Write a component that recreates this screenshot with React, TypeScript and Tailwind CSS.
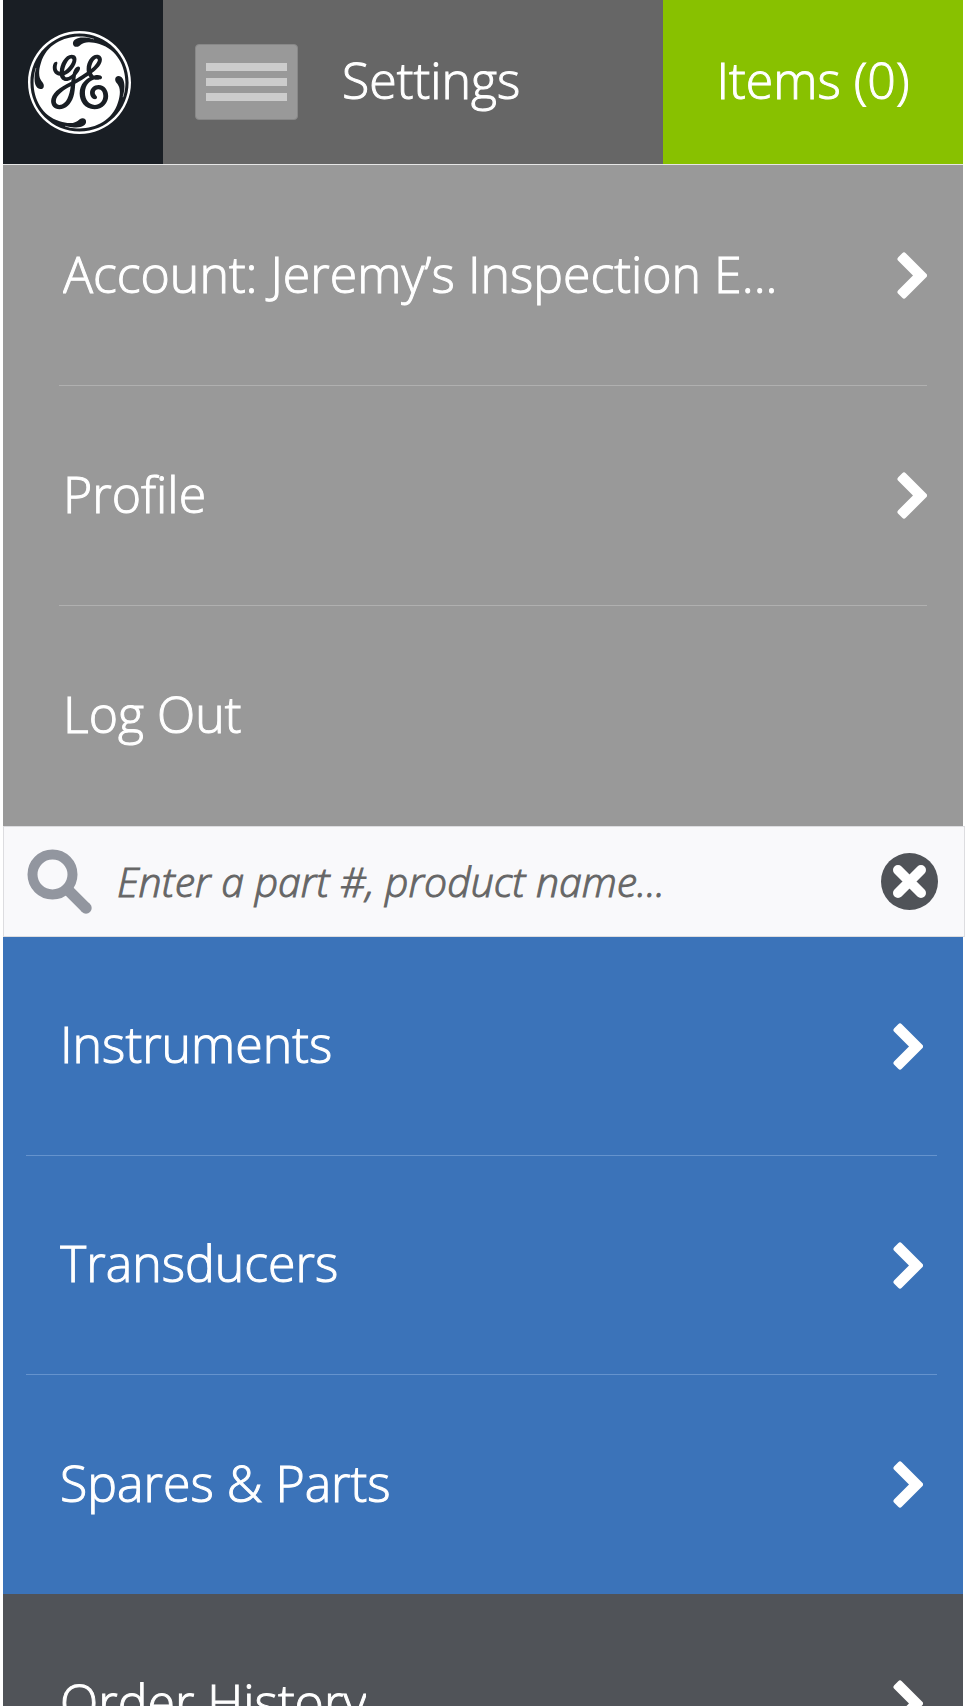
import { SiGeneralelectric } from "react-icons/si";

type Item = { label: string; arrow: boolean };

const settings: Item[] = [
  { label: "Account: Jeremy’s Inspection E...", arrow: true },
  { label: "Profile", arrow: true },
  { label: "Log Out", arrow: false },
];

const catalog: Item[] = [
  { label: "Instruments", arrow: true },
  { label: "Transducers", arrow: true },
  { label: "Spares & Parts", arrow: true },
];

function Chevron() {
  return (
    <svg viewBox="0 0 30 47" className="h-[47px] w-[30px] shrink-0" aria-hidden="true">
      <path
        d="M7 3 27.5 23.5 7 44 3 40 19.5 23.5 3 7Z"
        fill="#fff"
        stroke="#fff"
        strokeWidth="5"
        strokeLinejoin="round"
      />
    </svg>
  );
}

function Row({ item, className }: { item: Item; className: string }) {
  return (
    <li className={className}>
      <a href="#" className="flex h-full items-center justify-between gap-6">
        <span className="truncate pb-1">{item.label}</span>
        {item.arrow && <Chevron />}
      </a>
    </li>
  );
}

export default function App() {
  return (
    <div className="h-screen overflow-hidden bg-white pr-[5px] pl-[3px] font-['Open_Sans',sans-serif] text-[50px] leading-[68px] font-light text-white [-webkit-text-stroke:1px_currentColor]">
      <header className="flex h-[165px] border-b border-[#e6e6e6] bg-[#666]">
        <a href="#" aria-label="Home" className="flex w-40 shrink-0 items-center justify-center bg-[#191e24] pr-2">
          <SiGeneralelectric className="size-[103px]" />
        </a>
        <div className="flex flex-1 items-center gap-11 pl-8">
          <button
            type="button"
            aria-label="Menu"
            className="flex h-[76px] w-[103px] shrink-0 flex-col items-center justify-center gap-[7px] rounded-[4px] border border-[#888] bg-[#999]"
          >
            <span className="h-2 w-[81px] bg-[#ccc]" />
            <span className="h-2 w-[81px] bg-[#ccc]" />
            <span className="h-2 w-[81px] bg-[#ccc]" />
          </button>
          <h1 className="pb-1">Settings</h1>
        </div>
        <a href="#" className="flex w-[300px] shrink-0 items-center justify-center bg-[#88c100] pb-1">
          Items (0)
        </a>
      </header>

      <ul className="bg-[#999] pt-px pr-9 pl-14">
        {settings.map((item) => (
          <Row
            key={item.label}
            item={item}
            className="h-[220px] border-b border-[#b0b0b0] pl-1 last:border-b-0"
          />
        ))}
      </ul>

      <form className="-mr-0.5 flex h-[111px] items-center gap-6 border border-[#dddde0] bg-[#f9f9fb] pr-[26px] pl-[23px]">
        <svg viewBox="0 0 66 66" className="size-[66px] shrink-0" aria-hidden="true">
          <circle cx="25.5" cy="25.5" r="20" fill="none" stroke="#92969f" strokeWidth="10" />
          <path d="M41 41 59 59" stroke="#92969f" strokeWidth="11" />
          <circle cx="59" cy="59" r="5.7" fill="#92969f" />
        </svg>
        <input
          type="text"
          aria-label="Search products"
          placeholder="Enter a part #, product name..."
          className="min-w-0 flex-1 bg-transparent pb-0.5 text-[41px] leading-[58px] text-[#666] italic outline-none placeholder:text-[#666]"
        />
        <button type="button" aria-label="Clear search" className="shrink-0">
          <svg viewBox="0 0 57 57" className="size-[57px]" aria-hidden="true">
            <circle cx="28.5" cy="28.5" r="28.5" fill="#505358" />
            <path d="M17 17 40 40M40 17 17 40" stroke="#fff" strokeWidth="10" strokeLinecap="round" />
          </svg>
        </button>
      </form>

      <ul className="bg-[#3b73b9] pr-[26px] pl-[23px]">
        {catalog.map((item) => (
          <Row
            key={item.label}
            item={item}
            className="h-[219px] border-b border-[#6593cd] pr-[14px] pl-[34px] last:border-b-0"
          />
        ))}
      </ul>

      <ul className="bg-[#505358] pr-[26px] pl-[23px]">
        <Row item={{ label: "Order History", arrow: true }} className="h-[219px] pr-[14px] pl-[34px]" />
      </ul>
    </div>
  );
}
